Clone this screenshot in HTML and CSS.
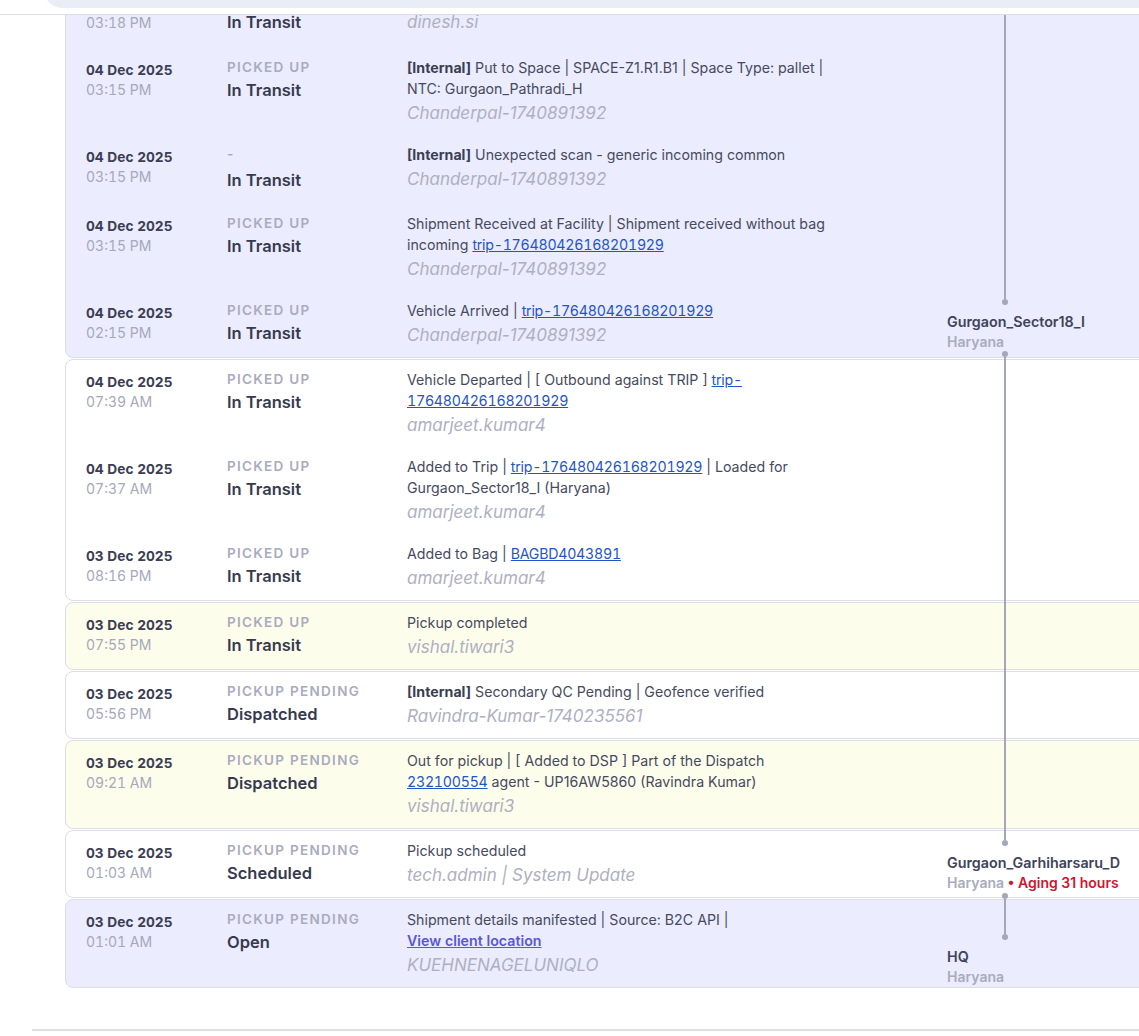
FILE: index.html
```html
<!DOCTYPE html>
<html lang="en">
<head>
<meta charset="utf-8">
<title>Shipment timeline</title>
<link rel="stylesheet" href="styles.css">
</head>
<body>
<header class="topbar"><div class="search"></div></header>

<main class="timeline">
  <section class="group g-blue row-1">
    <div class="event partial">
      <div class="when"><div class="time">03:18 PM</div></div>
      <div class="status"><div class="state">In Transit</div></div>
      <div class="info"><div class="user">dinesh.si</div></div>
    </div>
    <div class="event">
      <div class="when"><div class="date">04 Dec 2025</div><div class="time">03:15 PM</div></div>
      <div class="status"><div class="state-label">Picked Up</div><div class="state">In Transit</div></div>
      <div class="info"><div class="desc"><b>[Internal]</b> Put to Space | SPACE-Z1.R1.B1 | Space Type: pallet |<br>NTC: Gurgaon_Pathradi_H</div><div class="user">Chanderpal-1740891392</div></div>
    </div>
    <div class="event">
      <div class="when"><div class="date">04 Dec 2025</div><div class="time">03:15 PM</div></div>
      <div class="status"><div class="state-label dash">-</div><div class="state">In Transit</div></div>
      <div class="info"><div class="desc"><b>[Internal]</b> Unexpected scan - generic incoming common</div><div class="user">Chanderpal-1740891392</div></div>
    </div>
    <div class="event">
      <div class="when"><div class="date">04 Dec 2025</div><div class="time">03:15 PM</div></div>
      <div class="status"><div class="state-label">Picked Up</div><div class="state">In Transit</div></div>
      <div class="info"><div class="desc">Shipment Received at Facility | Shipment received without bag<br>incoming <a href="#">trip-176480426168201929</a></div><div class="user">Chanderpal-1740891392</div></div>
    </div>
    <div class="event">
      <div class="when"><div class="date">04 Dec 2025</div><div class="time">02:15 PM</div></div>
      <div class="status"><div class="state-label">Picked Up</div><div class="state">In Transit</div></div>
      <div class="info"><div class="desc">Vehicle Arrived | <a href="#">trip-176480426168201929</a></div><div class="user">Chanderpal-1740891392</div></div>
    </div>
  </section>

  <section class="group g-white row-2">
    <div class="event">
      <div class="when"><div class="date">04 Dec 2025</div><div class="time">07:39 AM</div></div>
      <div class="status"><div class="state-label">Picked Up</div><div class="state">In Transit</div></div>
      <div class="info"><div class="desc">Vehicle Departed | [ Outbound against TRIP ] <a href="#">trip-<br>176480426168201929</a></div><div class="user">amarjeet.kumar4</div></div>
    </div>
    <div class="event">
      <div class="when"><div class="date">04 Dec 2025</div><div class="time">07:37 AM</div></div>
      <div class="status"><div class="state-label">Picked Up</div><div class="state">In Transit</div></div>
      <div class="info"><div class="desc">Added to Trip | <a href="#">trip-176480426168201929</a> | Loaded for<br>Gurgaon_Sector18_I (Haryana)</div><div class="user">amarjeet.kumar4</div></div>
    </div>
    <div class="event">
      <div class="when"><div class="date">03 Dec 2025</div><div class="time">08:16 PM</div></div>
      <div class="status"><div class="state-label">Picked Up</div><div class="state">In Transit</div></div>
      <div class="info"><div class="desc">Added to Bag | <a href="#">BAGBD4043891</a></div><div class="user">amarjeet.kumar4</div></div>
    </div>
  </section>

  <section class="group g-yellow row-3">
    <div class="event">
      <div class="when"><div class="date">03 Dec 2025</div><div class="time">07:55 PM</div></div>
      <div class="status"><div class="state-label">Picked Up</div><div class="state">In Transit</div></div>
      <div class="info"><div class="desc">Pickup completed</div><div class="user">vishal.tiwari3</div></div>
    </div>
  </section>

  <section class="group g-white row-4">
    <div class="event">
      <div class="when"><div class="date">03 Dec 2025</div><div class="time">05:56 PM</div></div>
      <div class="status"><div class="state-label">Pickup Pending</div><div class="state">Dispatched</div></div>
      <div class="info"><div class="desc"><b>[Internal]</b> Secondary QC Pending | Geofence verified</div><div class="user">Ravindra-Kumar-1740235561</div></div>
    </div>
  </section>

  <section class="group g-yellow row-5">
    <div class="event">
      <div class="when"><div class="date">03 Dec 2025</div><div class="time">09:21 AM</div></div>
      <div class="status"><div class="state-label">Pickup Pending</div><div class="state">Dispatched</div></div>
      <div class="info"><div class="desc">Out for pickup | [ Added to DSP ] Part of the Dispatch<br><a href="#">232100554</a> agent - UP16AW5860 (Ravindra Kumar)</div><div class="user">vishal.tiwari3</div></div>
    </div>
  </section>

  <section class="group g-white row-6">
    <div class="event">
      <div class="when"><div class="date">03 Dec 2025</div><div class="time">01:03 AM</div></div>
      <div class="status"><div class="state-label">Pickup Pending</div><div class="state">Scheduled</div></div>
      <div class="info"><div class="desc">Pickup scheduled</div><div class="user">tech.admin | System Update</div></div>
    </div>
  </section>

  <section class="group g-blue row-7">
    <div class="event">
      <div class="when"><div class="date">03 Dec 2025</div><div class="time">01:01 AM</div></div>
      <div class="status"><div class="state-label">Pickup Pending</div><div class="state">Open</div></div>
      <div class="info"><div class="desc">Shipment details manifested | Source: B2C API | <a class="client-link" href="#">View client location</a></div><div class="user">KUEHNENAGELUNIQLO</div></div>
    </div>
  </section>

  <div class="loc loc-1">
    <div class="track"><span class="line"></span><span class="dot"></span></div>
    <div class="loc-name">Gurgaon_Sector18_I</div>
    <div class="loc-state">Haryana</div>
  </div>
  <div class="loc loc-2">
    <div class="track"><span class="dot"></span><span class="line"></span><span class="dot"></span></div>
    <div class="loc-name">Gurgaon_Garhiharsaru_D</div>
    <div class="loc-state">Haryana <span class="aging">• Aging 31 hours</span></div>
  </div>
  <div class="loc loc-3">
    <div class="track"><span class="dot"></span><span class="line"></span><span class="dot"></span></div>
    <div class="loc-name">HQ</div>
    <div class="loc-state">Haryana</div>
  </div>
</main>

<div class="footer-rule"></div>
</body>
</html>
```

FILE: styles.css
```css
html, body {
  margin: 0;
  padding: 0;
  overflow: hidden;
  background: #ffffff;
  font-family: Inter, "Noto Sans", "Liberation Sans", sans-serif;
  color: #3b3e54;
}

.topbar {
  position: fixed;
  top: 0;
  left: 0;
  right: 0;
  height: 14px;
  background: #ffffff;
  border-bottom: 1px solid #dcdde3;
  z-index: 5;
  overflow: hidden;
}

.search {
  margin-left: 43px;
  margin-right: -60px;
  margin-top: -32px;
  height: 40px;
  border-radius: 20px;
  background: #e9eef6;
}

.timeline {
  display: grid;
  grid-template-columns: 882px 218px;
  row-gap: 1px;
  margin-left: 65px;
  width: 1100px;
}

.group {
  grid-column: 1 / -1;
  border: 1px solid #dcdde7;
  border-radius: 8px;
  padding-left: 20px;
}

.row-1 { grid-row: 1; }
.row-2 { grid-row: 2; }
.row-3 { grid-row: 3; }
.row-4 { grid-row: 4; }
.row-5 { grid-row: 5; }
.row-6 { grid-row: 6; }
.row-7 { grid-row: 7; }

.g-blue { background: #ebecfd; }
.g-white { background: #ffffff; }
.g-yellow { background: #fdfdec; }

.event {
  display: grid;
  grid-template-columns: 141px 180px 470px;
  align-items: start;
  padding: 9px 0 11px;
}

.event.partial {
  align-items: center;
  padding-top: 8px;
  padding-bottom: 13px;
}

.when {
  padding-top: 3px;
  font-feature-settings: "tnum";
}

.partial .when { padding-top: 0; }

.date {
  font-size: 13.7px;
  font-weight: 700;
  line-height: 20px;
  color: #3b3e54;
}

.time {
  font-size: 14px;
  line-height: 19px;
  color: #a6a8bb;
}

.state-label {
  font-size: 13.5px;
  font-weight: 600;
  letter-spacing: 1.3px;
  line-height: 20px;
  color: #a9abbf;
  text-transform: uppercase;
}

.state-label.dash { margin-bottom: 3px; }

.state {
  font-size: 16.5px;
  font-weight: 600;
  line-height: 26px;
  color: #363a50;
}

.desc {
  font-size: 14.2px;
  line-height: 21px;
  color: #464a5f;
}

.desc b {
  font-weight: 700;
  color: #3b3e54;
}

.desc a {
  color: #1f55c8;
  text-decoration: underline;
  font-feature-settings: "tnum";
  letter-spacing: -0.25px;
}

.desc a.client-link {
  display: block;
  color: #5a55d8;
  font-weight: 600;
  letter-spacing: 0;
}

.user {
  font-size: 17px;
  font-style: italic;
  line-height: 22px;
  margin-top: 3px;
  color: #aeb0c2;
}

.partial .user { margin-top: 0; }

.loc {
  grid-column: 2;
  display: flex;
  flex-direction: column;
  padding-bottom: 6px;
  z-index: 1;
}

.loc-1 { grid-row: 1; }
.loc-2 { grid-row: 2 / 7; margin-top: -8px; padding-bottom: 5px; }
.loc-3 { grid-row: 7; margin-top: -6px; padding-bottom: 1px; }

.track {
  flex: 1;
  display: flex;
  flex-direction: column;
  align-items: center;
  width: 12px;
  margin-left: 52px;
}

.track .line {
  flex: 1;
  width: 2px;
  background: #a4a6ba;
}

.track .dot {
  width: 6px;
  height: 6px;
  border-radius: 50%;
  background: #a4a6ba;
  flex: none;
}

.loc-name {
  margin-top: 7px;
  font-size: 14.3px;
  font-weight: 600;
  line-height: 20px;
  color: #40435a;
  white-space: nowrap;
}

.loc-state {
  font-size: 14px;
  font-weight: 600;
  line-height: 20px;
  color: #a9abbe;
  white-space: nowrap;
}

.aging { color: #d1142f; }

.footer-rule {
  margin: 41px 0 0 32px;
  border-top: 2px solid #dedfe4;
}
```
